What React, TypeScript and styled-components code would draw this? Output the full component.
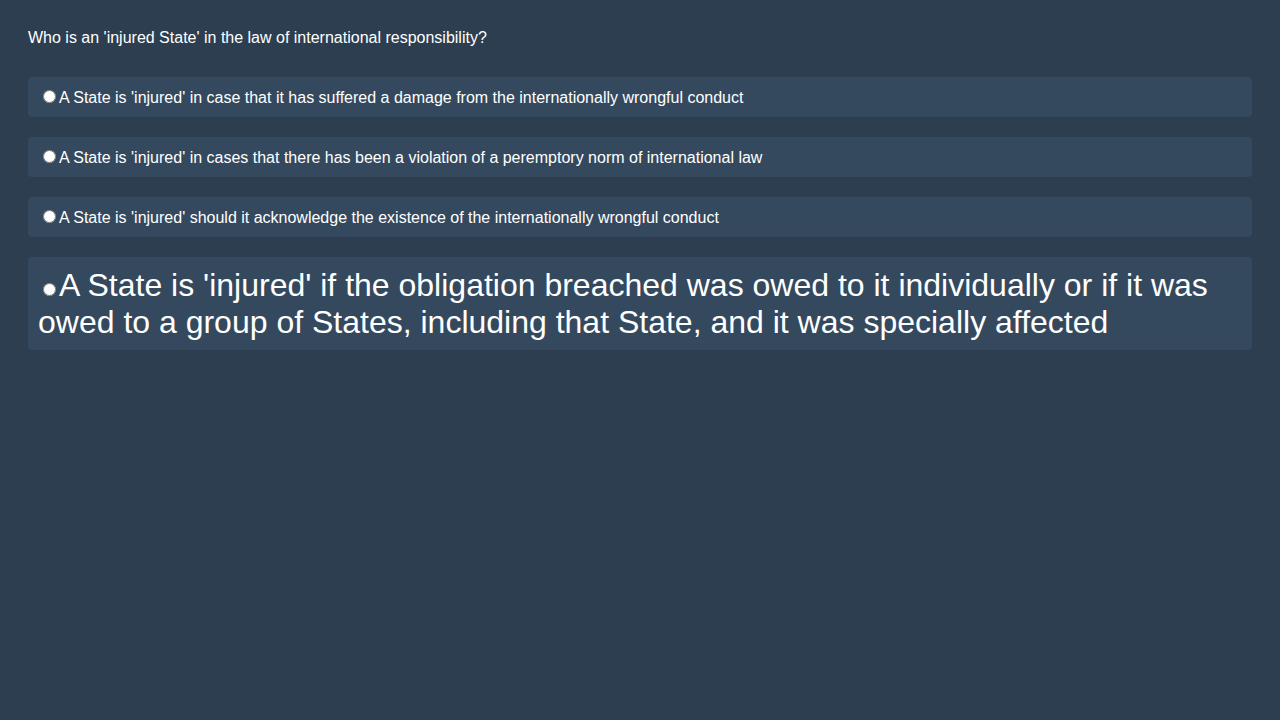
import React, { useState } from "react";
import styled, { createGlobalStyle } from "styled-components";

const GlobalStyle = createGlobalStyle`
  html, body {
    background: #2c3e50;
  }
  body {
    margin: 8px;
    font-family: "Liberation Sans", Arial, sans-serif;
    color: #ffffff;
  }
`;

const Quiz = styled.div`
  padding: 21px 20px 20px;
`;

const Question = styled.p`
  margin: 0 0 30px;
  font-size: 16px;
  line-height: 18px;
`;

const Options = styled.div`
  display: flex;
  flex-direction: column;
  gap: 20px;
`;

const Option = styled.label<{ big?: boolean }>`
  display: block;
  background: #34495e;
  border-radius: 4px;
  padding: ${(p) => (p.big ? "10px" : "11px 10px 9px")};
  font-size: ${(p) => (p.big ? "32px" : "16px")};
  line-height: ${(p) => (p.big ? "36.5px" : "20px")};
  cursor: pointer;
`;

const Radio = styled.input`
  margin: 0 3px 0 5px;
`;

const options = [
  "A State is 'injured' in case that it has suffered a damage from the internationally wrongful conduct",
  "A State is 'injured' in cases that there has been a violation of a peremptory norm of international law",
  "A State is 'injured' should it acknowledge the existence of the internationally wrongful conduct",
  "A State is 'injured' if the obligation breached was owed to it individually or if it was owed to a group of States, including that State, and it was specially affected",
];

const App: React.FC = () => {
  const [picked, setPicked] = useState<number | null>(null);

  return (
    <>
      <GlobalStyle />
      <Quiz>
        <Question>Who is an 'injured State' in the law of international responsibility?</Question>
        <Options>
          {options.map((text, i) => (
            <Option key={i} big={i === 3}>
              <Radio
                type="radio"
                name="answer"
                checked={picked === i}
                onChange={() => setPicked(i)}
              />
              {text}
            </Option>
          ))}
        </Options>
      </Quiz>
    </>
  );
};

export default App;
